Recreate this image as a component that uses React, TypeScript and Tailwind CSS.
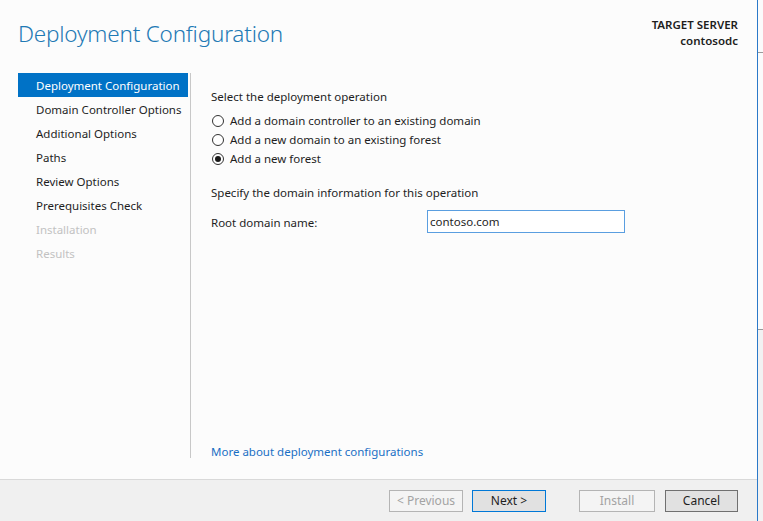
import React from 'react';

const steps = [
  { label: 'Deployment Configuration', active: true },
  { label: 'Domain Controller Options' },
  { label: 'Additional Options' },
  { label: 'Paths' },
  { label: 'Review Options' },
  { label: 'Prerequisites Check' },
  { label: 'Installation', disabled: true },
  { label: 'Results', disabled: true },
];

const options = [
  'Add a domain controller to an existing domain',
  'Add a new domain to an existing forest',
  'Add a new forest',
];

function Radio({ checked }: { checked?: boolean }) {
  return (
    <span className="flex h-[12px] w-[12px] items-center justify-center rounded-full border border-[#333333] bg-white">
      {checked && <span className="h-[6px] w-[6px] rounded-full bg-[#1a1a1a]" />}
    </span>
  );
}

export default function App() {
  return (
    <div
      className="flex h-[521px] w-[763px] overflow-hidden text-[11.5px] text-[#1e1e1e]"
      style={{ fontFamily: '"Noto Sans", "Open Sans", sans-serif' }}
    >
      <div className="flex w-[758px] flex-col border-r border-[#2b79c9] bg-[#fcfcfc]">
        {/* header */}
        <div className="flex h-[73px] items-start justify-between pl-[18px] pr-[19px]">
          <h1 className="mt-[17px] text-[22.5px] font-light tracking-[-0.2px] text-[#1f7ab5]">
            Deployment Configuration
          </h1>
          <div className="mt-[17px] text-right text-[11.5px] font-semibold leading-[16px] text-[#1e1e1e]">
            <div>TARGET SERVER</div>
            <div>contosodc</div>
          </div>
        </div>

        {/* body */}
        <div className="flex flex-1">
          <div className="h-[385px] w-[191px] border-r border-[#c8c8c8] pl-[18px] pr-[2px]">
            {steps.map((s) => (
              <div
                key={s.label}
                className={`h-[24px] whitespace-nowrap pl-[18px] pt-[1px] leading-[24px] ${
                  s.active
                    ? 'bg-[#0072c6] text-white'
                    : s.disabled
                      ? 'text-[#c2c2c2]'
                      : 'text-[#1e1e1e]'
                }`}
              >
                {s.label}
              </div>
            ))}
          </div>

          <div className="flex flex-1 flex-col pl-[20px] pt-[15px]">
            <div className="leading-[18px]">Select the deployment operation</div>
            <div className="mt-[5px] flex flex-col">
              {options.map((o, i) => (
                <label key={o} className="flex h-[19px] items-center gap-[6px] pl-[1px]">
                  <Radio checked={i === 2} />
                  <span>{o}</span>
                </label>
              ))}
            </div>
            <div className="mt-[16px] leading-[18px]">
              Specify the domain information for this operation
            </div>
            <div className="mt-[8px] flex items-center">
              <span className="w-[216px] pt-[2px]">Root domain name:</span>
              <div className="flex h-[23px] w-[198px] items-center border border-[#5a9ee0] bg-white px-[2px]">
                contoso.com
              </div>
            </div>
            <div className="flex-1" />
            <a className="mb-[18px] cursor-pointer leading-[18px] text-[#1a6fc4]">
              More about deployment configurations
            </a>
          </div>
        </div>

        {/* footer */}
        <div className="flex h-[42px] items-center justify-end border-t border-[#d9d9d9] bg-[#f0f0f0] pr-[19px] pt-[1px]">
          <button className="h-[22px] w-[74px] border border-[#b4b4b4] bg-[#f4f4f4] text-[12px] text-[#a3a3a3]">
            &lt; Previous
          </button>
          <button className="ml-[9px] h-[22px] w-[74px] border border-[#0078d7] bg-[#e1e1e1] text-[12px]">
            Next &gt;
          </button>
          <button className="ml-[33px] h-[22px] w-[76px] border border-[#b4b4b4] bg-[#f4f4f4] text-[12px] text-[#a3a3a3]">
            Install
          </button>
          <button className="ml-[10px] h-[22px] w-[73px] border border-[#707070] bg-[#e1e1e1] text-[12px]">
            Cancel
          </button>
        </div>
      </div>

      {/* window behind */}
      <div className="flex flex-1 flex-col bg-[#f5f5f5]">
        <div className="h-[53px] border-b border-[#9a9a9a] bg-[#fbfbfb]" />
        <div className="h-[277px] border-b border-[#9a9a9a] bg-[#fbfbfb]" />
        <div className="flex-1 bg-[#f2f2f2]" />
      </div>
    </div>
  );
}
